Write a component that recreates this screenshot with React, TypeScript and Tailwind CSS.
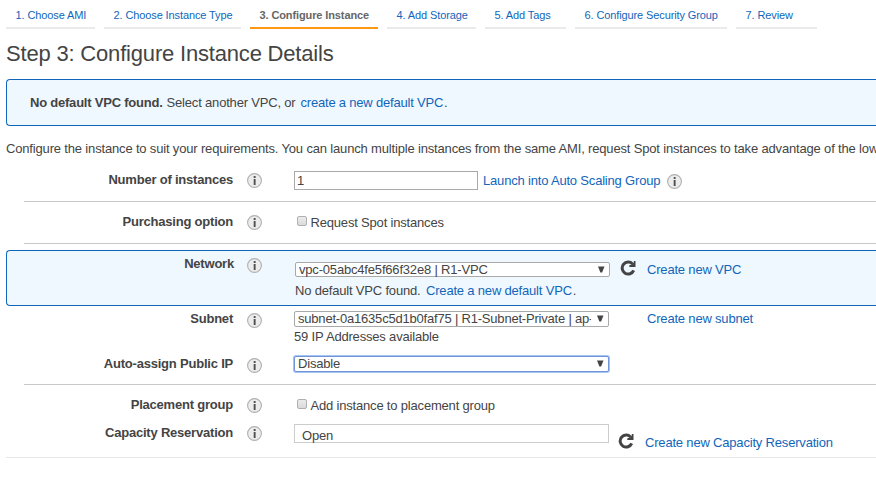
import type { ReactNode } from "react";

function InfoIcon({ className = "" }: { className?: string }) {
  return (
    <svg className={`h-[15px] w-[15px] shrink-0 ${className}`} viewBox="0 0 15 15">
      <circle cx="7.5" cy="7.5" r="6.9" fill="#ececec" stroke="#b0b0b0" strokeWidth="1.1" />
      <path d="M6.7 3h1.9v1.9H6.7zM6.7 6h1.9v6H6.7z" fill="#505050" />
    </svg>
  );
}

function RefreshIcon({ className = "" }: { className?: string }) {
  return (
    <svg className={`h-4 w-4 shrink-0 ${className}`} viewBox="0 0 16 16">
      <path d="M12.6 4A6 6 0 1 0 13.7 10.4" fill="none" stroke="#444" strokeWidth="3" />
      <path d="M15.5 1v6H9.3V5.2l2.4-.4L13.8 2.400V1z" fill="#444" />
    </svg>
  );
}

function Link({ children, className = "" }: { children: ReactNode; className?: string }) {
  return <a className={`shrink-0 text-[#1166bb] ${className}`}>{children}</a>;
}

function Label({ children, className = "" }: { children: ReactNode; className?: string }) {
  return <div className={`shrink-0 text-right font-bold tracking-[-0.21px] ${className}`}>{children}</div>;
}

function Checkbox({ className = "" }: { className?: string }) {
  return (
    <span
      className={`h-[10px] w-[10px] shrink-0 rounded-[2px] border border-[#b0b0b0] bg-linear-to-b from-[#ececec] to-[#dadada] ${className}`}
    />
  );
}

function SelectBox({ children, className = "" }: { children: ReactNode; className?: string }) {
  return (
    <div className={`flex w-[315px] shrink-0 items-start rounded-[2px] border bg-white pl-[3px] ${className}`}>
      <span className="h-[14px] w-[293px] shrink-0 overflow-hidden leading-[14px]">{children}</span>
      <svg className="ml-[6px] mt-[3px] h-[7px] w-[7px] shrink-0" viewBox="0 0 7 7">
        <path d="M0 .5h6.500L4.100 6.500H2.400z" fill="#444" />
      </svg>
    </div>
  );
}

const tabs = [
  { text: "1. Choose AMI", width: "w-[89px]" },
  { text: "2. Choose Instance Type", width: "w-[137px]" },
  { text: "3. Configure Instance", width: "w-[128px]", active: true },
  { text: "4. Add Storage", width: "w-[89px]" },
  { text: "5. Add Tags", width: "w-[81px]" },
  { text: "6. Configure Security Group", width: "w-[152px]" },
  { text: "7. Review", width: "w-[81px]" },
];

export default function App() {
  return (
    <div className="h-[477px] w-[876px] overflow-hidden whitespace-nowrap bg-white font-['Liberation_Sans',Arial,sans-serif] text-[13px] leading-[17px] tracking-[-0.185px] text-[#444]">
      <nav className="flex h-[29px] gap-[9px] pl-[6px] text-[11px] leading-[14px] tracking-[-0.11px]">
        {tabs.map((t) => (
          <div
            key={t.text}
            className={`shrink-0 border-b-2 pl-[9.5px] pt-2 ${t.width} ${
              t.active ? "border-[#ff9911] font-bold text-[#666]" : "border-[#eaeaea] text-[#1166bb]"
            }`}
          >
            {t.text}
          </div>
        ))}
      </nav>

      <h1 className="mt-[11px] pl-[6px] text-[22px] leading-[27px]">Step 3: Configure Instance Details</h1>

      <div className="ml-[6px] mt-3 flex h-[47px] rounded-l-[4px] border border-r-0 border-[#1166bb] bg-[#f0f8ff] pl-[23px] pt-[14px]">
        <b className="tracking-[-0.22px]">No default VPC found.</b>
        <span className="ml-1">Select another VPC, or</span>
        <Link className="ml-[5px] tracking-[-0.2px]">create a new default VPC</Link>
        <span className="ml-px">.</span>
      </div>

      <p className="mt-[14px] h-5 pl-[6px] tracking-[-0.165px]">
        Configure the instance to suit your requirements. You can launch multiple instances from the same AMI, request
        Spot instances to take advantage of the low
      </p>

      <section className="ml-6 flex h-[42px] items-start border-b border-[#c8c8c8]">
        <Label className="mt-[11px] w-[209px]">Number of instances</Label>
        <InfoIcon className="ml-[14px] mt-[13px]" />
        <div className="ml-8 mt-[11px] h-[19px] w-[184px] shrink-0 border border-[#a9a9a9] bg-white pl-[2px]">1</div>
        <Link className="ml-[5px] mt-3">Launch into Auto Scaling Group</Link>
        <InfoIcon className="ml-[7px] mt-[14px]" />
      </section>

      <section className="ml-6 flex h-[42px] items-start border-b border-[#c8c8c8]">
        <Label className="mt-[11px] w-[209px]">Purchasing option</Label>
        <InfoIcon className="ml-[14px] mt-[13px]" />
        <Checkbox className="ml-[35px] mt-[14px]" />
        <span className="ml-[3.5px] mt-3">Request Spot instances</span>
      </section>

      <section className="ml-[6px] mt-[6px] flex h-[56px] items-start rounded-l-[4px] border border-r-0 border-[#1166bb] bg-[#f0f8ff]">
        <Label className="mt-1 w-[227px]">Network</Label>
        <InfoIcon className="ml-[13px] mt-[7px]" />
        <div className="ml-[33px] mt-[11px] shrink-0">
          <SelectBox className="h-[15px] border-[#a9a9a9]">vpc-05abc4fe5f66f32e8 | R1-VPC</SelectBox>
          <div className="mt-[5px] flex">
            <span>No default VPC found.</span>
            <Link className="ml-[5.5px]">Create a new default VPC</Link>
            <span className="ml-px">.</span>
          </div>
        </div>
        <RefreshIcon className="ml-[10px] mt-[9px]" />
        <Link className="ml-[11px] mt-[10px]">Create new VPC</Link>
      </section>

      <section className="ml-6 h-[79px] border-b border-[#c8c8c8]">
        <div className="flex h-[45px] items-start">
          <Label className="mt-1 w-[209px]">Subnet</Label>
          <InfoIcon className="ml-[14px] mt-[6.500px]" />
          <div className="ml-8 mt-[5px] shrink-0">
            <SelectBox className="h-4 border-[#a9a9a9] tracking-[-0.2px]">
              subnet-0a1635c5d1b0faf75 | R1-Subnet-Private | ap-
            </SelectBox>
            <div className="mt-px">59 IP Addresses available</div>
          </div>
          <Link className="ml-[38px] mt-1">Create new subnet</Link>
        </div>
        <div className="flex items-start">
          <Label className="mt-1 w-[209px]">Auto-assign Public IP</Label>
          <InfoIcon className="ml-[14px] mt-[6.500px]" />
          <SelectBox className="ml-8 mt-[5px] h-4 border-[#6f94d8] shadow-[0_0_0_1px_#a5c3f3]">Disable</SelectBox>
        </div>
      </section>

      <section className="ml-[6px] h-[73px] border-b border-[#e8e8e8] pl-[18px]">
        <div className="flex h-7 items-start">
          <Label className="mt-[11px] w-[209px]">Placement group</Label>
          <InfoIcon className="ml-[14px] mt-[13px]" />
          <Checkbox className="ml-[35px] mt-[14px]" />
          <span className="ml-[3.5px] mt-3">Add instance to placement group</span>
        </div>
        <div className="flex items-start">
          <Label className="mt-[11px] w-[209px]">Capacity Reservation</Label>
          <InfoIcon className="ml-[14px] mt-[13px]" />
          <div className="ml-8 mt-[11px] h-[19px] w-[315px] shrink-0 border border-[#ccc] bg-white pl-[7px] pt-[2px]">
            Open
          </div>
          <RefreshIcon className="ml-[9px] mt-5" />
          <Link className="ml-[11px] mt-[21px]">Create new Capacity Reservation</Link>
        </div>
      </section>
    </div>
  );
}
